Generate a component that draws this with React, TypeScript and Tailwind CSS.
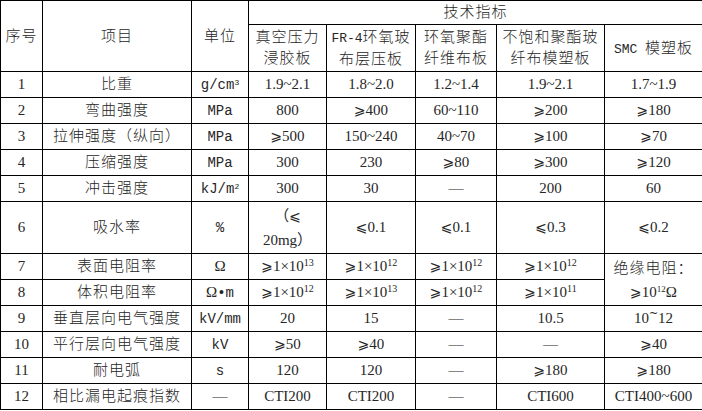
import React from 'react';

const GE = () => <span className="font-['DejaVu_Sans',sans-serif] text-[14px]">⩾</span>;
const LE = () => <span className="font-['DejaVu_Sans',sans-serif] text-[14px]">⩽</span>;

const Pow = ({ ge = true, exp }: { ge?: boolean; exp: string }) => (
  <span>
    {ge && <GE />}1×10<sup className="text-[10px]">{exp}</sup>
  </span>
);

const Unit = ({ children }: { children: React.ReactNode }) => (
  <span className="font-['Liberation_Mono','Noto_Sans_CJK_SC',monospace] text-[14px]">{children}</span>
);

const Dash = () => <span>—</span>;

type Row = {
  no: string;
  name: string;
  unit: React.ReactNode;
  vals: React.ReactNode[];
  tall?: boolean;
};

const rows: Row[] = [
  { no: '1', name: '比重', unit: <Unit>g/cm<sup className="text-[8px]">3</sup></Unit>, vals: ['1.9~2.1', '1.8~2.0', '1.2~1.4', '1.9~2.1', '1.7~1.9'] },
  { no: '2', name: '弯曲强度', unit: <Unit>MPa</Unit>, vals: ['800', <><GE />400</>, '60~110', <><GE />200</>, <><GE />180</>] },
  { no: '3', name: '拉伸强度（纵向）', unit: <Unit>MPa</Unit>, vals: [<><GE />500</>, '150~240', '40~70', <><GE />100</>, <><GE />70</>] },
  { no: '4', name: '压缩强度', unit: <Unit>MPa</Unit>, vals: ['300', '230', <><GE />80</>, <><GE />300</>, <><GE />120</>] },
  { no: '5', name: '冲击强度', unit: <Unit>kJ/m<sup className="text-[8px]">2</sup></Unit>, vals: ['300', '30', <Dash />, '200', '60'] },
  {
    no: '6',
    name: '吸水率',
    unit: <Unit>%</Unit>,
    tall: true,
    vals: [
      <span className="block leading-[24px]">
        （<LE /><br />20mg）
      </span>,
      <><LE />0.1</>,
      <><LE />0.1</>,
      <><LE />0.3</>,
      <><LE />0.2</>,
    ],
  },
];

const rows2: Row[] = [
  {
    no: '9',
    name: '垂直层向电气强度',
    unit: <Unit>kV/mm</Unit>,
    vals: ['20', '15', <Dash />, '10.5', <span>10<span className="relative -top-[6px] text-[11px] font-['DejaVu_Sans',sans-serif]">~</span>12</span>],
  },
  { no: '10', name: '平行层向电气强度', unit: <Unit>kV</Unit>, vals: [<><GE />50</>, <><GE />40</>, <Dash />, <Dash />, <><GE />40</>] },
  { no: '11', name: '耐电弧', unit: <Unit>s</Unit>, vals: ['120', '120', <Dash />, <><GE />180</>, <><GE />180</>] },
  { no: '12', name: '相比漏电起痕指数', unit: <Dash />, vals: ['CTI200', 'CTI200', <Dash />, 'CTI600', 'CTI400~600'] },
];

const td = 'border border-black text-center align-middle p-0';
const cn = 'tracking-[1px] font-light';

function BodyRow({ r }: { r: Row }) {
  return (
    <tr className={r.tall ? 'h-[52px]' : 'h-[26px]'}>
      <td className={td}>{r.no}</td>
      <td className={`${td} ${cn}`}>{r.name}</td>
      <td className={td}>{r.unit}</td>
      {r.vals.map((v, i) => (
        <td key={i} className={td}>
          {v}
        </td>
      ))}
    </tr>
  );
}

export default function App() {
  return (
    <div className="w-[702px] h-[411px] bg-white overflow-hidden">
      <table className="w-[702px] table-fixed border-collapse text-[15px] text-[#262626] font-['Liberation_Serif','Noto_Sans_CJK_SC',serif] leading-none">
        <colgroup>
          <col className="w-[42px]" />
          <col className="w-[149px]" />
          <col className="w-[57px]" />
          <col className="w-[78px]" />
          <col className="w-[89px]" />
          <col className="w-[81px]" />
          <col className="w-[108px]" />
          <col className="w-[98px]" />
        </colgroup>
        <thead>
          <tr className="h-[24px]">
            <th rowSpan={2} className={`${td} ${cn}`}>序号</th>
            <th rowSpan={2} className={`${td} ${cn}`}>项目</th>
            <th rowSpan={2} className={`${td} ${cn}`}>单位</th>
            <th colSpan={5} className={`${td} ${cn}`}>技术指标</th>
          </tr>
          <tr className="h-[47px]">
            <th className={`${td} ${cn} leading-[21px]`}>真空压力<br />浸胶板</th>
            <th className={`${td} ${cn} leading-[21px]`}>
              <span className="font-['Liberation_Mono',monospace] text-[13px] tracking-normal font-normal">FR-4</span>环氧玻<br />布层压板
            </th>
            <th className={`${td} ${cn} leading-[21px]`}>环氧聚酯<br />纤维布板</th>
            <th className={`${td} ${cn} leading-[21px]`}>不饱和聚酯玻<br />纤布模塑板</th>
            <th className={`${td} ${cn}`}>
              <span className="font-['Liberation_Mono',monospace] text-[13px] tracking-normal font-normal">SMC </span>模塑板
            </th>
          </tr>
        </thead>
        <tbody>
          {rows.map((r) => (
            <BodyRow key={r.no} r={r} />
          ))}
          <tr className="h-[26px]">
            <td className={td}>7</td>
            <td className={`${td} ${cn}`}>表面电阻率</td>
            <td className={td}>Ω</td>
            <td className={td}><Pow exp="13" /></td>
            <td className={td}><Pow exp="12" /></td>
            <td className={td}><Pow exp="12" /></td>
            <td className={td}><Pow exp="12" /></td>
            <td rowSpan={2} className={`${td} leading-[24px]`}>
              <span className={cn}>绝缘电阻：</span>
              <br />
              <GE />10<sup className="text-[9px]">12</sup>Ω
            </td>
          </tr>
          <tr className="h-[26px]">
            <td className={td}>8</td>
            <td className={`${td} ${cn}`}>体积电阻率</td>
            <td className={td}>Ω<Unit>•m</Unit></td>
            <td className={td}><Pow exp="12" /></td>
            <td className={td}><Pow exp="13" /></td>
            <td className={td}><Pow exp="12" /></td>
            <td className={td}><Pow exp="11" /></td>
          </tr>
          {rows2.map((r) => (
            <BodyRow key={r.no} r={r} />
          ))}
        </tbody>
      </table>
    </div>
  );
}
